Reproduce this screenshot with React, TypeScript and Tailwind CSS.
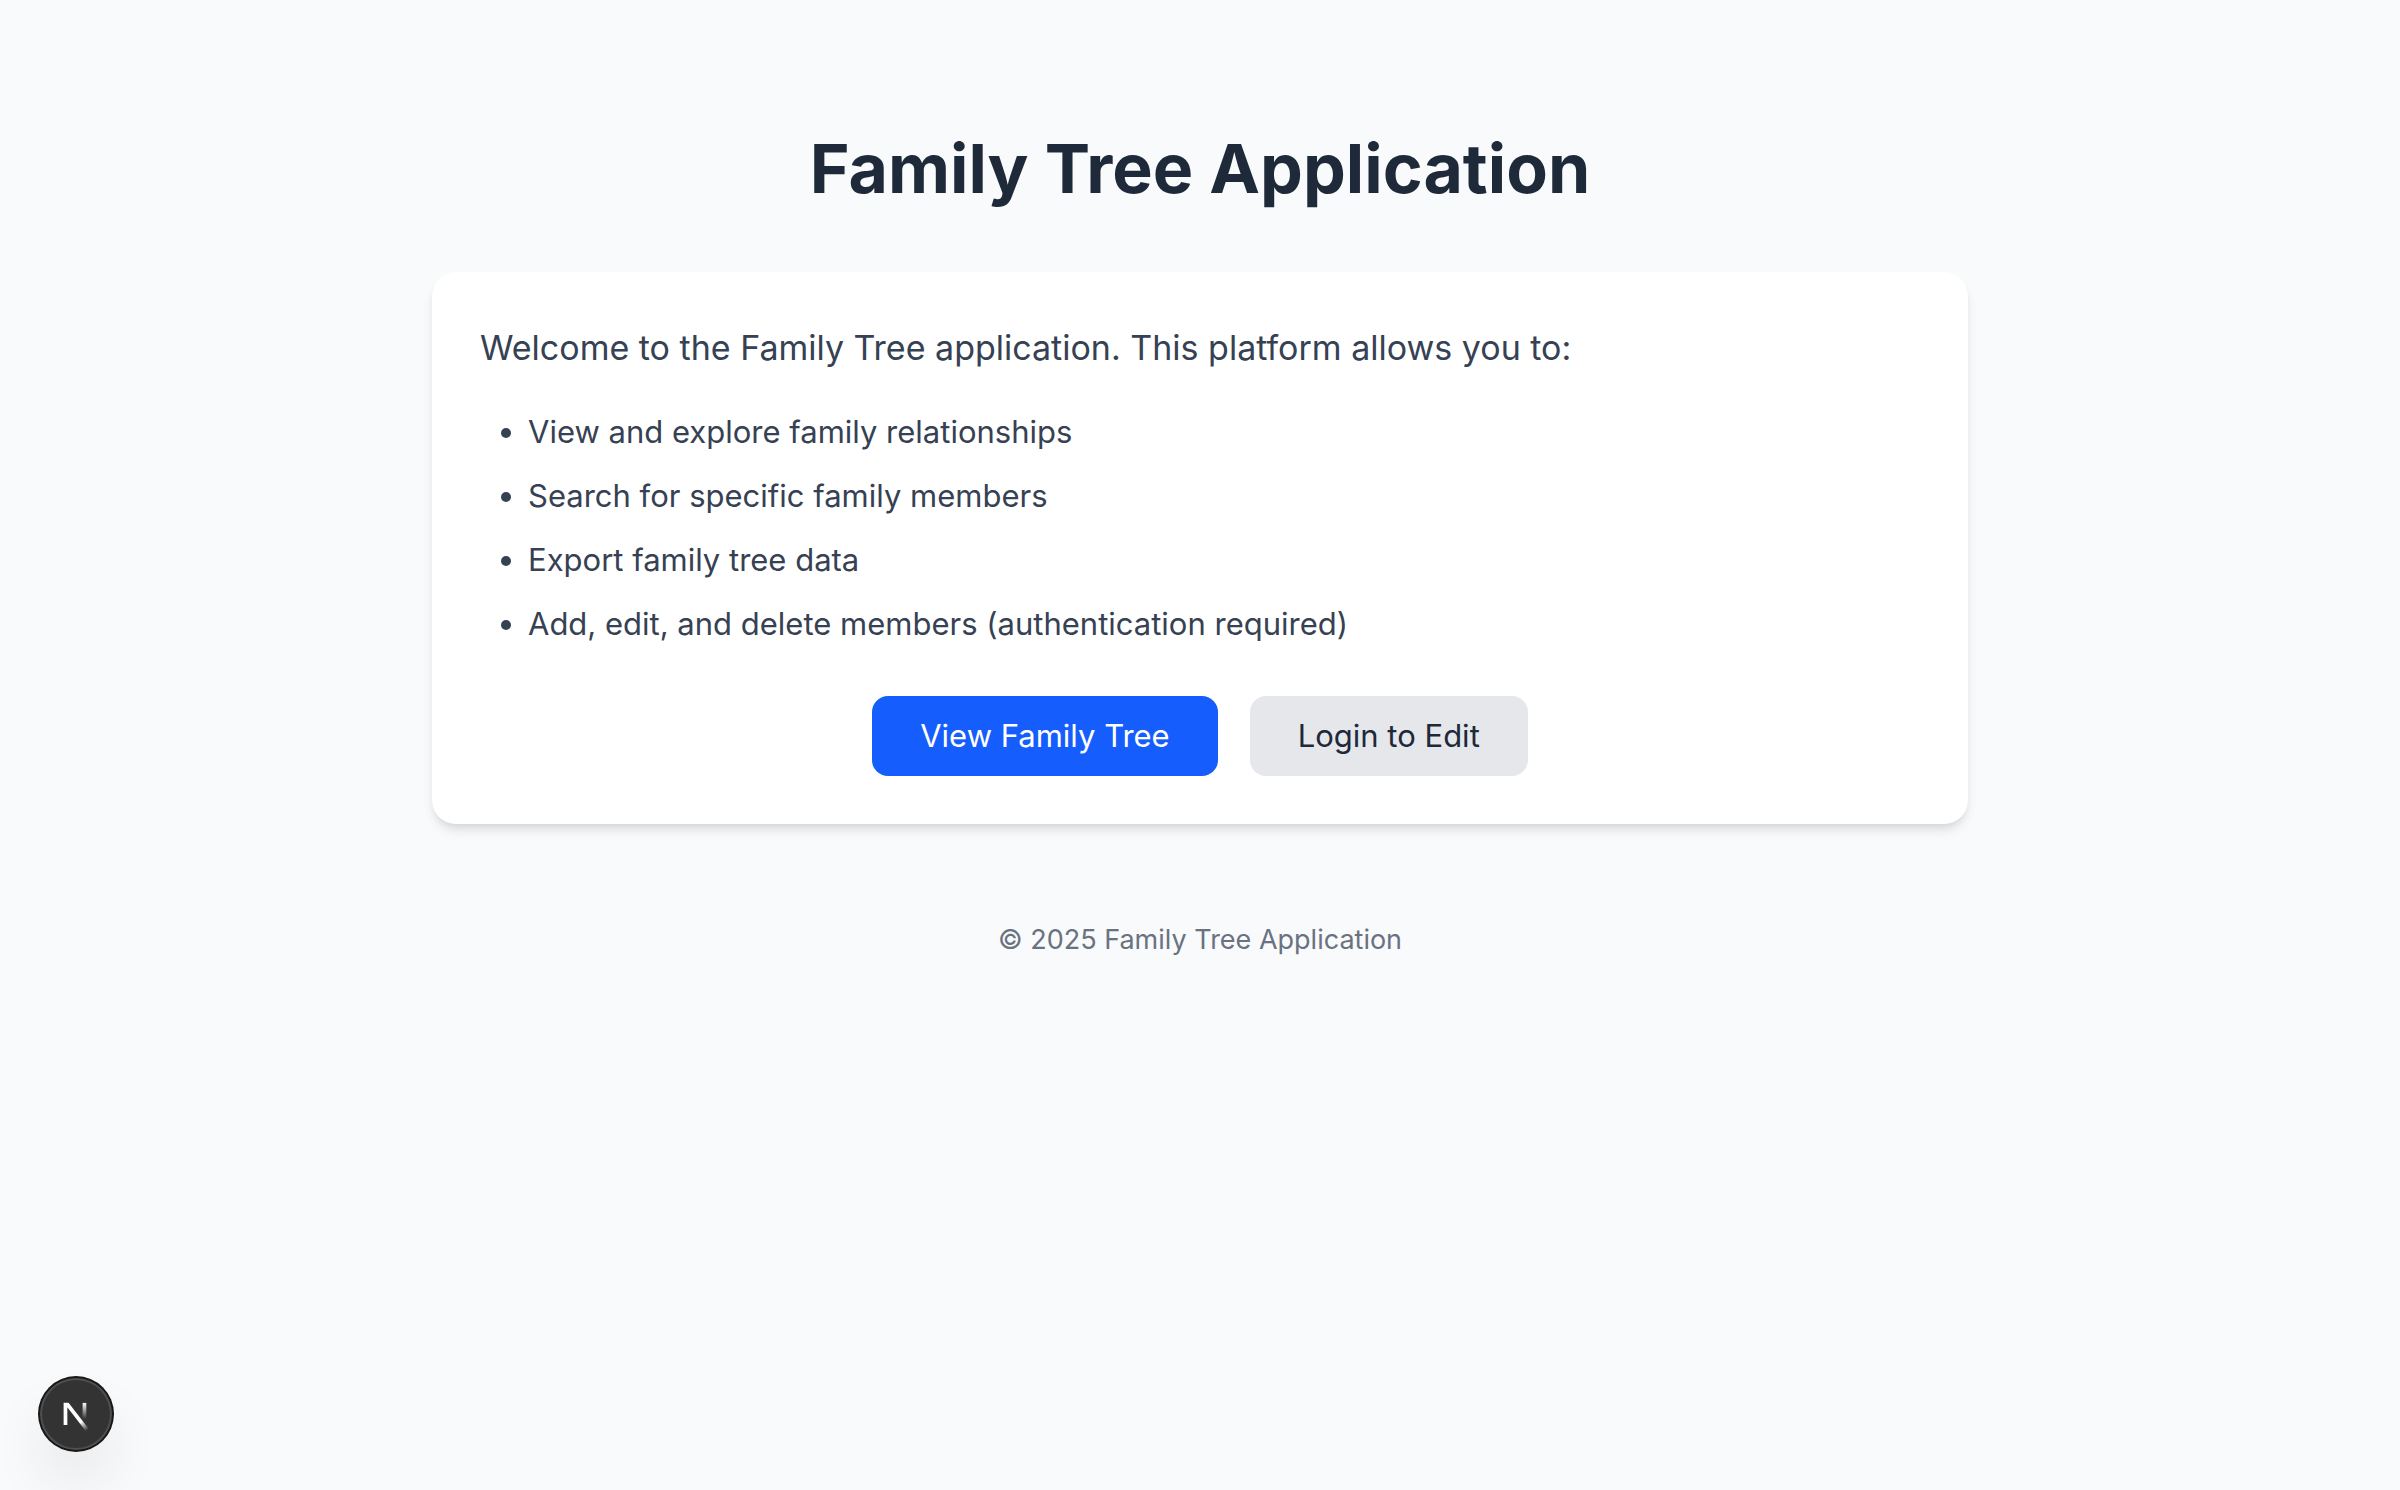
const features = [
  'View and explore family relationships',
  'Search for specific family members',
  'Export family tree data',
  'Add, edit, and delete members (authentication required)',
];

function DevToolsButton() {
  return (
    <button
      type="button"
      aria-label="Open Next.js Dev Tools"
      className="fixed bottom-10 left-10 size-[72px] rounded-full bg-[#333333] shadow-[0_0_0_2px_#171717,inset_0_0_0_2px_rgba(255,255,255,0.14),0_32px_64px_-16px_rgba(0,0,0,0.24)]"
    >
      <svg viewBox="0 0 36 36" fill="none" className="size-full" aria-hidden="true">
        <defs>
          <linearGradient id="diagonal" x1="9.95555" y1="11.1226" x2="15.4778" y2="17.9671" gradientUnits="userSpaceOnUse">
            <stop stopColor="white" />
            <stop offset="0.604072" stopColor="white" stopOpacity="0" />
            <stop offset="1" stopColor="white" stopOpacity="0" />
          </linearGradient>
          <linearGradient id="stem" x1="11.8222" y1="1.40039" x2="11.791" y2="9.62542" gradientUnits="userSpaceOnUse">
            <stop stopColor="white" />
            <stop offset="1" stopColor="white" stopOpacity="0" />
          </linearGradient>
          <clipPath id="cap">
            <rect x="0" y="1.45" width="20" height="18" />
          </clipPath>
        </defs>
        <g transform="translate(10.4 10.9)" clipPath="url(#cap)" strokeWidth="1.86">
          <path d="M13.3 15.2 L2.34 1 V12.6" stroke="url(#diagonal)" />
          <path d="M11.825 1.5 V13.1" stroke="url(#stem)" />
        </g>
      </svg>
    </button>
  );
}

export default function App() {
  return (
    <div className="min-h-screen bg-gray-50 px-8 py-32 font-['Inter',sans-serif]">
      <main className="mx-auto max-w-[1536px]">
        <h1 className="mb-16 text-center text-[68px] leading-20 font-bold text-gray-800">
          Family Tree Application
        </h1>

        <section className="rounded-3xl bg-white p-12 text-gray-700 shadow-[0_8px_12px_-2px_rgba(0,0,0,0.1),0_4px_8px_-4px_rgba(0,0,0,0.1)]">
          <p className="mb-8 text-[34px] leading-14">
            Welcome to the Family Tree application. This platform allows you to:
          </p>
          <ul className="mb-12 list-disc space-y-4 pl-12 text-[31px] leading-12">
            {features.map((feature) => (
              <li key={feature}>{feature}</li>
            ))}
          </ul>
          <div className="flex flex-wrap justify-center gap-8 text-[31px] leading-12">
            <button type="button" className="rounded-2xl bg-blue-600 px-12 py-4 text-white">
              View Family Tree
            </button>
            <button type="button" className="rounded-2xl bg-gray-200 px-12 py-4 text-gray-800">
              Login to Edit
            </button>
          </div>
        </section>

        <footer className="mt-24 text-center text-[27px] leading-10 text-gray-500">
          © 2025 Family Tree Application
        </footer>
      </main>
      <DevToolsButton />
    </div>
  );
}
